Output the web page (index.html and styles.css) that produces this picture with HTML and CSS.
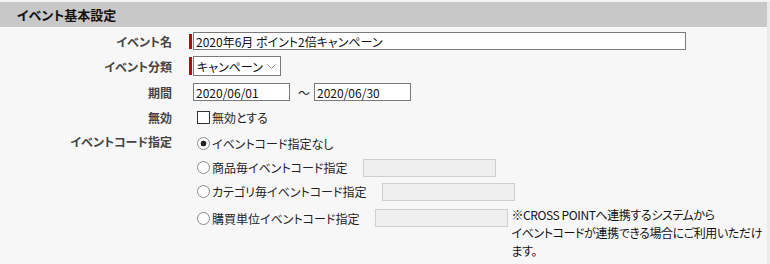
FILE: index.html
```html
<!DOCTYPE html>
<html lang="ja">
<head>
<meta charset="utf-8">
<title>イベント基本設定</title>
<link rel="stylesheet" href="styles.css">
</head>
<body>
<section class="panel">
  <h2 class="panel-title">イベント基本設定</h2>
  <div class="form">
    <div class="row row-name">
      <div class="label">イベント名</div>
      <div class="field">
        <span class="req"></span>
        <input class="text text-wide" type="text" value="2020年6月 ポイント2倍キャンペーン">
      </div>
    </div>
    <div class="row row-type">
      <div class="label">イベント分類</div>
      <div class="field">
        <span class="req req-sel"></span>
        <span class="select-wrap">
          <select class="select"><option>キャンペーン</option></select>
          <svg class="chev" width="9" height="5" viewBox="0 0 9 5"><path d="M0.5 0.5 L4.5 4.5 L8.5 0.5" fill="none" stroke="#8a8a8a" stroke-width="1"/></svg>
        </span>
      </div>
    </div>
    <div class="row row-period">
      <div class="label">期間</div>
      <div class="field field-plain">
        <input class="text text-date" type="text" value="2020/06/01">
        <span class="tilde">〜</span>
        <input class="text text-date" type="text" value="2020/06/30">
      </div>
    </div>
    <div class="row row-disable">
      <div class="label">無効</div>
      <div class="field field-plain">
        <label class="check"><input type="checkbox" class="cb"><span>無効とする</span></label>
      </div>
    </div>
    <div class="row row-code">
      <div class="label label-top">イベントコード指定</div>
      <div class="field field-plain options">
        <label class="opt opt1"><input type="radio" name="code" class="rb" checked><span>イベントコード指定なし</span></label>
        <label class="opt opt2"><input type="radio" name="code" class="rb"><span>商品毎イベントコード指定</span><input class="text text-dis" type="text" disabled></label>
        <label class="opt opt3"><input type="radio" name="code" class="rb"><span>カテゴリ毎イベントコード指定</span><input class="text text-dis" type="text" disabled></label>
        <div class="opt opt4">
          <label class="opt4-main"><input type="radio" name="code" class="rb"><span>購買単位イベントコード指定</span><input class="text text-dis" type="text" disabled></label>
          <p class="note">※CROSS POINTへ連携するシステムから<br>イベントコードが連携できる場合にご利用いただけ<br>ます。</p>
        </div>
      </div>
    </div>
  </div>
</section>
</body>
</html>
```

FILE: styles.css
```css
html, body {
  margin: 0;
  padding: 0;
}
body {
  background: #f4f4f4;
  font-family: "Noto Sans CJK JP", "Liberation Sans", sans-serif;
  font-size: 12px;
  line-height: 15px;
  color: #222;
  font-feature-settings: "palt";
  width: 770px;
  height: 264px;
  overflow: hidden;
}
.panel {
  margin-top: 2px;
  width: 767px;
  height: 262px;
  background: #f7f7f7;
  border-right: 3px solid #eaeaea;
}
.panel-title {
  margin: 0;
  height: 25px;
  line-height: 25px;
  background: #c8c8c8;
  padding-left: 17px;
  font-size: 13px;
  font-weight: bold;
  color: #111;
}
.row {
  display: flex;
  align-items: center;
  box-sizing: border-box;
}
.label {
  width: 172px;
  text-align: right;
  font-weight: bold;
  color: #444;
  flex: none;
}
.field {
  margin-left: 17px;
  display: flex;
  align-items: center;
  white-space: nowrap;
}
.field-plain {
  margin-left: 21px;
}
.req {
  width: 3px;
  height: 15px;
  background: #c0000a;
  margin-right: 1px;
}
.req-sel {
  height: 18px;
}
.text {
  box-sizing: border-box;
  height: 18px;
  border: 1px solid #7a7a7a;
  background: #fff;
  padding: 0 2px;
  margin: 0;
  font-family: "Noto Sans CJK JP", "Liberation Sans", sans-serif;
  font-feature-settings: "palt";
  font-size: 12px;
  color: #111;
  outline: none;
  flex: none;
}
.text-wide {
  width: 493px;
}
.text-date {
  width: 97px;
}
.text-dis {
  width: 133px;
  background: #efefef;
  border-color: #cfcfcf;
  margin-left: 16px;
}
.tilde {
  margin: 0 4px 0 8px;
  font-size: 12px;
}
.row-name {
  height: 26px;
  padding-top: 2px;
}
.row-type {
  height: 26px;
}
.row-period {
  height: 26px;
}
.row-disable {
  height: 24px;
}
.select-wrap {
  position: relative;
  display: inline-block;
}
.select {
  appearance: none;
  -webkit-appearance: none;
  box-sizing: border-box;
  width: 88px;
  height: 20px;
  border: 1px solid #7a7a7a;
  border-radius: 0;
  background: #fff;
  padding: 0 0 0 3px;
  margin: 0;
  font-family: "Noto Sans CJK JP", "Liberation Sans", sans-serif;
  font-feature-settings: "palt";
  font-size: 12px;
  color: #111;
  display: block;
}
.chev {
  position: absolute;
  right: 5px;
  top: 8px;
}
.check {
  display: flex;
  align-items: center;
}
.cb {
  appearance: none;
  -webkit-appearance: none;
  box-sizing: border-box;
  width: 13px;
  height: 13px;
  margin: 0 2px 0 4px;
  border: 1px solid #333;
  background: #fff;
  border-radius: 0;
  flex: none;
}
.row-code {
  align-items: flex-start;
}
.label-top {
  margin-top: 5px;
}
.options {
  display: flex;
  flex-direction: column;
  align-items: flex-start;
}
.opt {
  display: flex;
  align-items: center;
}
.opt1 {
  height: 28px;
}
.opt2 {
  height: 21px;
}
.opt3 {
  height: 27px;
}
.opt4 {
  align-items: flex-start;
  padding-top: 4px;
}
.opt4-main {
  display: flex;
  align-items: center;
  height: 18px;
}
.rb {
  appearance: none;
  -webkit-appearance: none;
  box-sizing: border-box;
  width: 13px;
  height: 13px;
  margin: 0 2px 0 4px;
  border: 1px solid #8a8a8a;
  border-radius: 50%;
  background: #fff;
  flex: none;
}
.rb:checked {
  background: radial-gradient(circle, #222 0 2.6px, #fff 3.2px);
}
.note {
  margin: -3px 0 0 3px;
  line-height: 18px;
  letter-spacing: -0.4px;
  color: #111;
}
```
